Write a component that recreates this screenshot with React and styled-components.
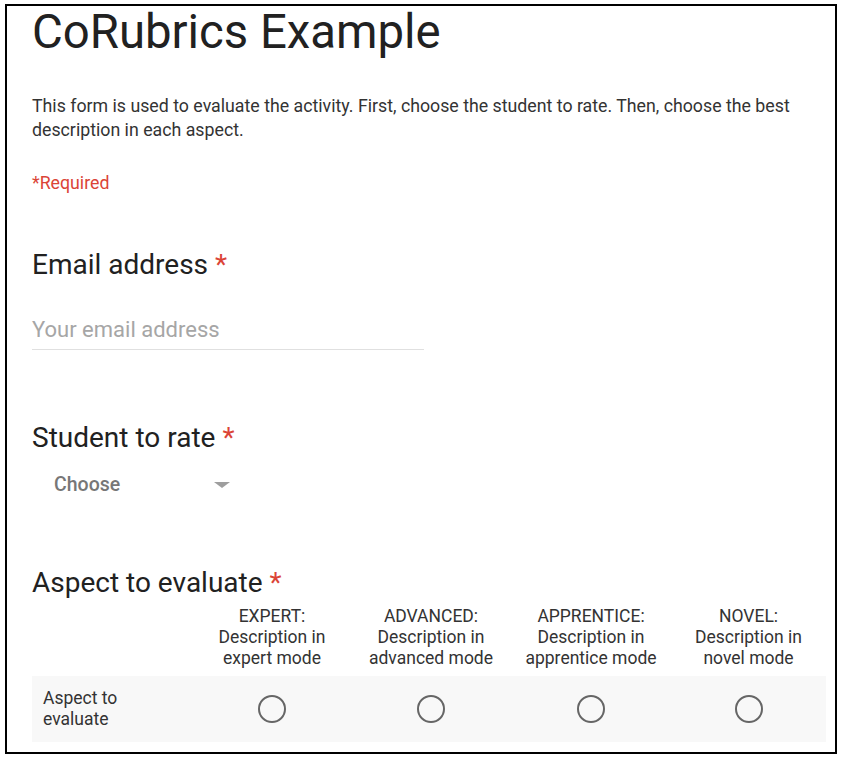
import React from 'react';
import styled, {createGlobalStyle} from 'styled-components';

const Global = createGlobalStyle`
  html, body {
    margin: 0;
    padding: 0;
    background: #fff;
    font-family: Roboto, "Liberation Sans", sans-serif;
    color: #212121;
  }
`;

const Frame = styled.div`
  box-sizing: border-box;
  margin: 4px 0 0 5px;
  width: 832px;
  height: 750px;
  border: 2px solid #000;
  padding: 0 8px 0 25px;
  overflow: hidden;
`;

const Title = styled.h1`
  margin: 0;
  font-size: 47.3px;
  font-weight: 400;
  line-height: 52px;
  color: #212121;
`;

const Description = styled.p`
  margin: 36px 0 0;
  font-size: 17.75px;
  line-height: 24px;
  color: #333;
`;

const Required = styled.div`
  margin-top: 29px;
  font-size: 17.75px;
  line-height: 24px;
  color: #db4437;
`;

const Question = styled.div`
  margin-top: ${p => p.$top}px;
`;

const Label = styled.div`
  font-size: 28px;
  line-height: 36px;
  color: #212121;
`;

const Star = styled.span`
  color: #db4437;
  margin-left: 7px;
`;

const TextInput = styled.div`
  width: 392px;
  margin-top: 33px;
  padding-bottom: 5px;
  border-bottom: 1px solid #e0e0e0;
  font-size: 22px;
  line-height: 28px;
  color: #a6a6a6;
`;

const Select = styled.div`
  box-sizing: border-box;
  display: flex;
  align-items: center;
  width: 198px;
  margin-top: 15px;
  padding-left: 22px;
  font-size: 19.5px;
  font-weight: 500;
  line-height: 28px;
  color: #777;
`;

const Arrow = styled.span`
  margin-left: auto;
  width: 0;
  height: 0;
  border-left: 8px solid transparent;
  border-right: 8px solid transparent;
  border-top: 6px solid #9e9e9e;
`;

const Grid = styled.div`
  display: grid;
  grid-template-columns: 161px 158px 160px 160px 155px;
  width: 794px;
  margin-top: 5px;
`;

const Head = styled.div`
  text-align: center;
  font-size: 17.5px;
  line-height: 21px;
  color: #333;
  padding-bottom: 7px;
`;

const Cell = styled.div`
  display: flex;
  align-items: center;
  justify-content: ${p => (p.$label ? 'flex-start' : 'center')};
  background: #f8f8f8;
  height: 66px;
  padding-left: ${p => (p.$label ? '11px' : '0')};
  font-size: 17.5px;
  line-height: 21px;
  color: #333;
`;

const Radio = styled.span`
  box-sizing: border-box;
  width: 28px;
  height: 28px;
  border: 2px solid #666;
  border-radius: 50%;
`;

const levels = [
  ['EXPERT:', 'expert mode'],
  ['ADVANCED:', 'advanced mode'],
  ['APPRENTICE:', 'apprentice mode'],
  ['NOVEL:', 'novel mode'],
];

const App = () => (
  <>
    <Global />
    <Frame>
      <Title>CoRubrics Example</Title>
      <Description>
        This form is used to evaluate the activity. First, choose the student to rate. Then, choose the best
        description in each aspect.
      </Description>
      <Required>*Required</Required>
      <Question $top={52}>
        <Label>Email address<Star>*</Star></Label>
        <TextInput>Your email address</TextInput>
      </Question>
      <Question $top={70}>
        <Label>Student to rate<Star>*</Star></Label>
        <Select>Choose<Arrow /></Select>
      </Question>
      <Question $top={66}>
        <Label>Aspect to evaluate<Star>*</Star></Label>
        <Grid>
          <Head />
          {levels.map(([name, mode]) => (
            <Head key={name}>
              {name}<br />Description in<br />{mode}
            </Head>
          ))}
          <Cell $label>Aspect to<br />evaluate</Cell>
          {levels.map(([name]) => (
            <Cell key={name}><Radio /></Cell>
          ))}
        </Grid>
      </Question>
    </Frame>
  </>
);

export default App;
